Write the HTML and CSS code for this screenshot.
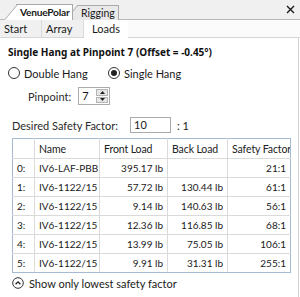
FILE: index.html
```html
<!DOCTYPE html>
<html lang="en">
<head>
    <meta charset="UTF-8">
    <title>VenuePolar | Loads</title>
    <link rel="stylesheet" href="styles.css">
</head>
<body>

<div class="window">
    <div class="doc-bar">
        <div class="doc-tab active">VenuePolar</div>
        <div class="doc-tab">Rigging</div>
        <svg class="close" width="9" height="9" viewBox="0 0 9 9"><path d="M1 1 L8 8 M8 1 L1 8" stroke="#1a1a1a" stroke-width="1.4"/></svg>
    </div>

    <div class="page-bar">
        <div class="page-tab">Start</div>
        <div class="page-tab">Array</div>
        <div class="page-tab active">Loads</div>
    </div>

    <div class="panel">
        <h1 class="title">Single Hang at Pinpoint 7 (Offset = -0.45°)</h1>

        <div class="radios">
            <label class="radio"><span class="dot"></span>Double Hang</label>
            <label class="radio checked"><span class="dot"></span>Single Hang</label>
        </div>

        <div class="pinpoint">
            <span class="label">Pinpoint:</span>
            <div class="spin">
                <span class="spin-value">7</span>
                <div class="spin-btns">
                    <span class="spin-btn"><svg width="5" height="3" viewBox="0 0 5 3"><path d="M0 3 L2.5 0 L5 3 Z" fill="#222"/></svg></span>
                    <span class="spin-btn"><svg width="5" height="3" viewBox="0 0 5 3"><path d="M0 0 L5 0 L2.5 3 Z" fill="#222"/></svg></span>
                </div>
            </div>
        </div>

        <div class="factor">
            <span class="label">Desired Safety Factor:</span>
            <span class="factor-input">10</span>
            <span class="ratio">: 1</span>
        </div>

        <table class="loads">
            <colgroup>
                <col class="c-idx"><col class="c-name"><col class="c-front"><col class="c-back"><col>
            </colgroup>
            <thead>
                <tr><th></th><th>Name</th><th>Front Load</th><th>Back Load</th><th>Safety Factor</th></tr>
            </thead>
            <tbody>
                <tr><td>0:</td><td>IV6-LAF-PBB</td><td class="num">395.17 lb</td><td class="num"></td><td class="num">21:1</td></tr>
                <tr><td>1:</td><td>IV6-1122/15</td><td class="num">57.72 lb</td><td class="num">130.44 lb</td><td class="num">61:1</td></tr>
                <tr><td>2:</td><td>IV6-1122/15</td><td class="num">9.14 lb</td><td class="num">140.63 lb</td><td class="num">56:1</td></tr>
                <tr><td>3:</td><td>IV6-1122/15</td><td class="num">12.36 lb</td><td class="num">116.85 lb</td><td class="num">68:1</td></tr>
                <tr><td>4:</td><td>IV6-1122/15</td><td class="num">13.99 lb</td><td class="num">75.05 lb</td><td class="num">106:1</td></tr>
                <tr><td>5:</td><td>IV6-1122/15</td><td class="num">9.91 lb</td><td class="num">31.31 lb</td><td class="num">255:1</td></tr>
            </tbody>
        </table>

        <div class="toggle">
            <svg width="12" height="12" viewBox="0 0 12 12"><circle cx="6" cy="6" r="5.3" fill="none" stroke="#333" stroke-width="1"/><path d="M3.6 7.2 L6 4.8 L8.4 7.2" fill="none" stroke="#222" stroke-width="1.3"/></svg>
            <span>Show only lowest safety factor</span>
        </div>
    </div>
</div>

</body>
</html>
```

FILE: styles.css
```css
* { margin: 0; padding: 0; box-sizing: border-box; }
body { width: 300px; height: 297px; background: #fff; color: #1a1a1a; font-family: Lato, "Noto Sans", sans-serif; font-size: 11px; overflow: hidden; }
.window { width: 300px; height: 297px; display: flex; flex-direction: column; }

.doc-bar { height: 20px; background: #f0f0f0; border-bottom: 1px solid #b9b9b9; display: flex; align-items: flex-end; padding-left: 4px; }
.doc-tab { position: relative; width: 42px; height: 15px; line-height: 14px; padding-left: 4px; margin-left: 4px; background: #e9e9e9; border-top: 1px solid #a9a9a9; border-right: 1px solid #a9a9a9; font-size: 10.5px; z-index: 1; margin-bottom: -1px; }
.doc-tab::before { content: ''; position: absolute; left: -12px; top: -1px; bottom: 0; width: 14px; background: inherit; border-left: 1px solid #a9a9a9; border-top: 1px solid #a9a9a9; transform: skewX(-40deg); transform-origin: bottom left; z-index: -1; }
.doc-tab.active { width: 57px; margin-left: 12px; height: 16px; padding-left: 4px; background: #fff; font-weight: bold; font-size: 10.2px; letter-spacing: -0.25px; z-index: 2; }
.close { margin-left: auto; margin-right: 5px; align-self: center; }

.page-bar { height: 18px; background: #fbfbfb; border-bottom: 1px solid #d6d6d6; display: flex; }
.page-tab { width: 42px; padding-left: 4px; line-height: 17px; font-size: 11px; background: #f0f0f0; border-right: 1px solid #dadada; }
.page-tab.active { width: 44px; background: #fff; text-align: center; padding-left: 0; border-right: none; height: 18px; }

.panel { flex: 1; border-right: 1px solid #d2d2d2; margin-right: 1px; }
.title { font-family: "Noto Sans", Lato, sans-serif; font-size: 10px; font-weight: bold; color: #111; height: 16px; line-height: 16px; margin: 6px 0 0 8px; }

.radios { display: flex; height: 16px; margin: 5px 0 0 8px; }
.radio { display: flex; align-items: center; gap: 4px; width: 100px; font-size: 11px; }
.dot { width: 12px; height: 12px; border: 1px solid #333; border-radius: 50%; display: flex; align-items: center; justify-content: center; }
.radio.checked .dot::after { content: ''; width: 6px; height: 6px; border-radius: 50%; background: #222; }

.pinpoint { display: flex; align-items: center; height: 18px; margin: 6px 0 0 28px; }
.label { color: #2a2a2a; }
.spin { width: 32px; height: 18px; margin-left: 7px; border: 1px solid #ababab; display: flex; }
.spin-value { flex: 1; padding-left: 3px; line-height: 16px; }
.spin-btns { display: flex; flex-direction: column; gap: 1px; padding: 1px; }
.spin-btn { width: 12px; flex: 1; background: #e6e6e6; border: 1px solid #b4b4b4; display: flex; align-items: center; justify-content: center; }

.factor { display: flex; align-items: center; height: 16px; margin: 12px 0 0 12px; }
.factor-input { width: 41px; height: 16px; margin-left: 12px; border: 1px solid #ababab; padding-left: 3px; line-height: 14px; }
.ratio { margin-left: 6px; }

.loads { margin: 5px 0 0 12px; width: 279px; border-collapse: collapse; border: 1px solid #a7bad4; table-layout: fixed; font-size: 10px; }
.c-idx { width: 22px; }
.c-name { width: 65px; }
.c-front { width: 68px; }
.c-back { width: 60px; }
.loads th, .loads td { border: 1px solid #dadada; height: 19px; padding: 0 4px; font-weight: normal; text-align: left; white-space: nowrap; overflow: hidden; }
.loads th { height: 20px; font-size: 10.5px; letter-spacing: -0.1px; color: #222; }
.loads td.num { text-align: right; }
.loads tr > :first-child { border-left-color: #a7bad4; }
.loads tr > :last-child { border-right-color: #a7bad4; }
.loads thead th { border-top-color: #a7bad4; }
.loads tbody tr:last-child td { border-bottom-color: #a7bad4; }

.toggle { display: flex; align-items: center; gap: 5px; height: 12px; margin: 4px 0 0 12px; }
```
